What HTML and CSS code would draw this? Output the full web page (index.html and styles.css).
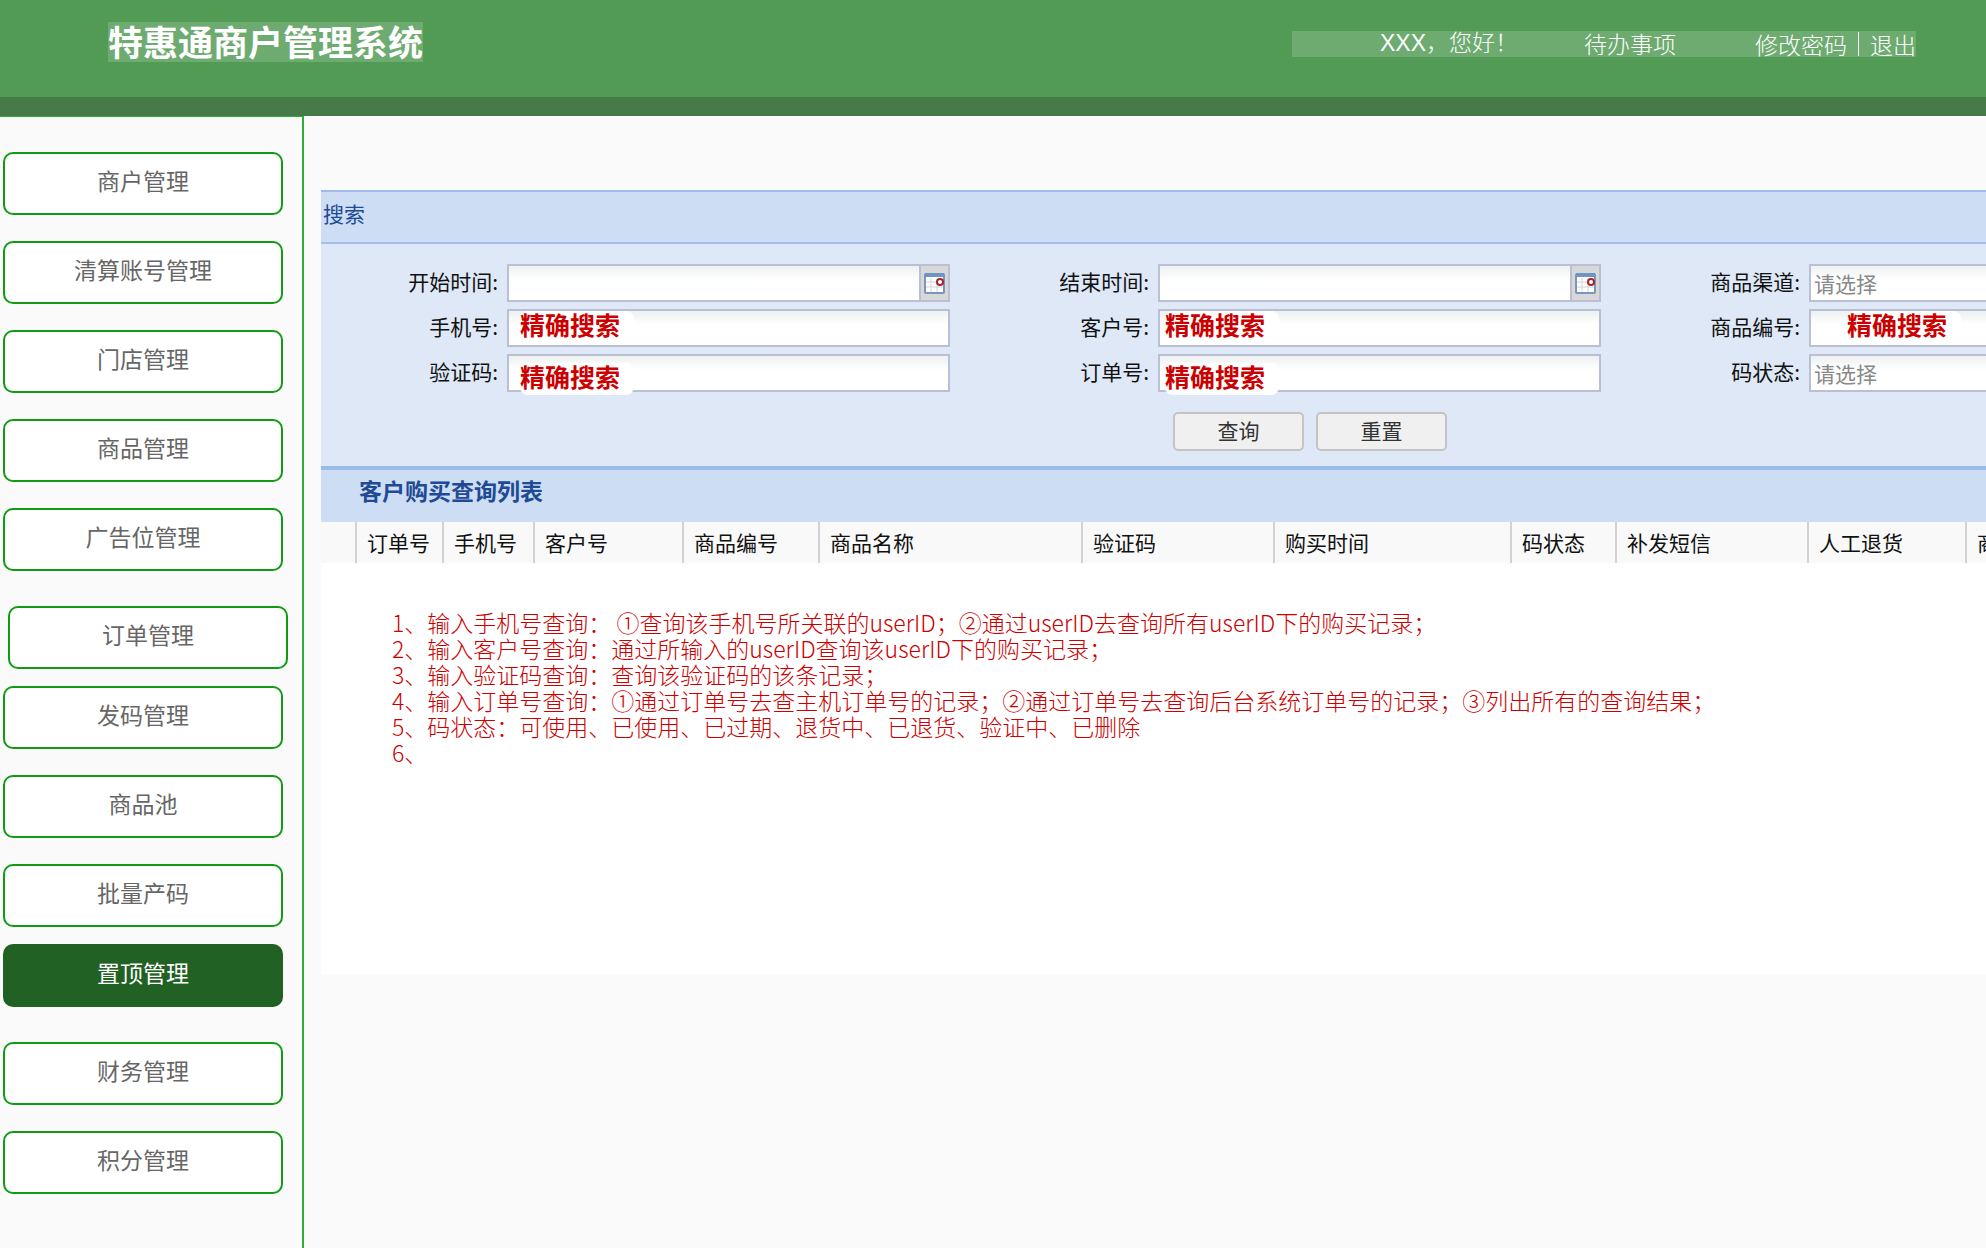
FILE: index.html
```html
<!DOCTYPE html>
<html lang="zh-CN">
<head>
<meta charset="utf-8">
<title>特惠通商户管理系统</title>
<link rel="stylesheet" href="styles.css">
</head>
<body>
<header class="topbar">
  <h1 class="brand">特惠通商户管理系统</h1>
  <div class="user-nav">
    <span class="greeting">XXX，您好！</span>
    <a href="#">待办事项</a>
    <span class="account"><a href="#">修改密码</a><i class="bar"></i><a href="#">退出</a></span>
  </div>
</header>
<div class="layout">
  <nav class="sidebar">
    <a class="item" href="#">商户管理</a>
    <a class="item" href="#">清算账号管理</a>
    <a class="item" href="#">门店管理</a>
    <a class="item" href="#">商品管理</a>
    <a class="item" href="#">广告位管理</a>
    <a class="item apart indented" href="#">订单管理</a>
    <a class="item close" href="#">发码管理</a>
    <a class="item" href="#">商品池</a>
    <a class="item" href="#">批量产码</a>
    <a class="item close active" href="#">置顶管理</a>
    <a class="item apart" href="#">财务管理</a>
    <a class="item" href="#">积分管理</a>
  </nav>
  <main class="content">
    <section>
      <h2 class="panel-title">搜索</h2>
      <form class="search">
        <div class="fields">
          <div class="field">
            <label for="start">开始时间:</label>
            <div class="control dated"><input id="start" type="text"><button type="button" class="picker" aria-label="选择开始时间"><svg width="21" height="22" viewBox="0 0 21 22"><rect x="1" y="2" width="19" height="19" rx="1" fill="#fff" stroke="#7796c0" stroke-width="2"/><path d="M1 3h19" stroke="#6f93c2" stroke-width="4"/><path d="M7 6v14M13 6v14M2 10h17M2 15h17" stroke="#d4d4d4" stroke-width="1"/><circle cx="16" cy="10" r="3" fill="#fff" stroke="#a12630" stroke-width="2"/></svg></button></div>
          </div>
          <div class="field">
            <label for="end">结束时间:</label>
            <div class="control dated"><input id="end" type="text"><button type="button" class="picker" aria-label="选择结束时间"><svg width="21" height="22" viewBox="0 0 21 22"><rect x="1" y="2" width="19" height="19" rx="1" fill="#fff" stroke="#7796c0" stroke-width="2"/><path d="M1 3h19" stroke="#6f93c2" stroke-width="4"/><path d="M7 6v14M13 6v14M2 10h17M2 15h17" stroke="#d4d4d4" stroke-width="1"/><circle cx="16" cy="10" r="3" fill="#fff" stroke="#a12630" stroke-width="2"/></svg></button></div>
          </div>
          <div class="field">
            <label for="channel">商品渠道:</label>
            <div class="control"><select id="channel"><option>请选择</option></select></div>
          </div>
          <div class="field">
            <label for="phone">手机号:</label>
            <div class="control"><input id="phone" type="text"><span class="note upper first">精确搜索</span></div>
          </div>
          <div class="field">
            <label for="customer">客户号:</label>
            <div class="control"><input id="customer" type="text"><span class="note upper">精确搜索</span></div>
          </div>
          <div class="field">
            <label for="goods">商品编号:</label>
            <div class="control"><input id="goods" type="text"><span class="note upper last">精确搜索</span></div>
          </div>
          <div class="field">
            <label for="code">验证码:</label>
            <div class="control"><input id="code" type="text"><span class="note lower first">精确搜索</span></div>
          </div>
          <div class="field">
            <label for="order">订单号:</label>
            <div class="control"><input id="order" type="text"><span class="note lower">精确搜索</span></div>
          </div>
          <div class="field">
            <label for="state">码状态:</label>
            <div class="control"><select id="state"><option>请选择</option></select></div>
          </div>
        </div>
        <div class="actions">
          <button type="button" class="btn">查询</button>
          <button type="reset" class="btn">重置</button>
        </div>
      </form>
    </section>
    <section class="results">
      <h2 class="list-title">客户购买查询列表</h2>
      <table class="grid">
        <colgroup><col class="c-tick"><col class="c-order"><col class="c-phone"><col class="c-customer"><col class="c-goods"><col class="c-name"><col class="c-code"><col class="c-time"><col class="c-state"><col class="c-sms"><col class="c-refund"><col class="c-more"></colgroup>
        <thead>
          <tr><th></th><th>订单号</th><th>手机号</th><th>客户号</th><th>商品编号</th><th>商品名称</th><th>验证码</th><th>购买时间</th><th>码状态</th><th>补发短信</th><th>人工退货</th><th>商</th></tr>
        </thead>
      </table>
      <div class="remarks">
        <p>1、输入手机号查询： ①查询该手机号所关联的userID；②通过userID去查询所有userID下的购买记录；</p>
        <p>2、输入客户号查询：通过所输入的userID查询该userID下的购买记录；</p>
        <p>3、输入验证码查询：查询该验证码的该条记录；</p>
        <p>4、输入订单号查询：①通过订单号去查主机订单号的记录；②通过订单号去查询后台系统订单号的记录；③列出所有的查询结果；</p>
        <p>5、码状态：可使用、已使用、已过期、退货中、已退货、验证中、已删除</p>
        <p>6、</p>
      </div>
    </section>
  </main>
</div>
</body>
</html>
```
FILE: styles.css
```css
* { box-sizing: border-box; }

body {
  margin: 0;
  min-height: 100vh;
  display: flex;
  flex-direction: column;
  overflow-x: hidden;
  background: #fafafa;
  color: #111;
  font: 21px/26px "Noto Sans CJK SC", sans-serif;
}

h1, h2, p { margin: 0; }
a { color: inherit; text-decoration: none; }

.topbar {
  display: flex;
  justify-content: space-between;
  align-items: flex-start;
  height: 116px;
  padding: 22px 70px 0 108px;
  background: #519b55;
  border-bottom: 19px solid #467a48;
}

.brand {
  height: 40px;
  background: #6eab70;
  color: #fff;
  font-size: 35px;
  line-height: 38px;
}

.user-nav {
  display: flex;
  justify-content: flex-end;
  gap: 66px;
  width: 624px;
  height: 26px;
  margin-top: 9px;
  background: #6eab70;
  color: #fff;
  font-size: 23px;
  font-weight: 300;
  line-height: 25px;
  white-space: nowrap;
}

.greeting { font-family: "Liberation Sans", "Noto Sans CJK SC", sans-serif; }
.account { display: flex; align-items: center; padding-left: 13px; }
.bar { width: 1px; height: 24px; margin: 0 11px; background: #fff; }

.layout {
  flex: 1;
  display: grid;
  grid-template-columns: 304px minmax(0, 1fr);
}

.sidebar {
  display: flex;
  flex-direction: column;
  gap: 26px;
  padding: 35px 19px 35px 3px;
  border-top: 1px solid #2fae30;
  border-right: 2px solid #35aa38;
}

.item {
  width: 280px;
  height: 63px;
  padding-bottom: 7px;
  display: flex;
  align-items: center;
  justify-content: center;
  border: 2px solid #109c12;
  border-radius: 10px;
  background: #fff;
  color: #666;
  font-size: 23px;
}

.apart { margin-top: 9px; }
.close { margin-top: -9px; }
.indented { margin-left: 5px; }
.active { background: #216123; border-color: #216123; color: #fff; }

.content { padding: 74px 0 0 17px; overflow: hidden; }

.panel-title {
  height: 54px;
  padding: 8px 2px;
  border-top: 2px solid #9cbdea;
  border-bottom: 2px solid #a3bfec;
  background: #cdddf3;
  color: #204a94;
  font-size: 21px;
  font-weight: 400;
}

.search {
  height: 222px;
  padding-top: 20px;
  background: #dee8f7;
}

.fields {
  display: grid;
  grid-template-columns: repeat(3, 628px);
  gap: 7px 23px;
}

.field {
  display: grid;
  grid-template-columns: 177px 443px;
  column-gap: 9px;
}

.field label { line-height: 35px; text-align: right; }

.control { position: relative; display: flex; height: 38px; }

.control input, .control select {
  flex: 1;
  min-width: 0;
  height: 100%;
  margin: 0;
  padding: 0 3px;
  border: 2px solid #bbbfd3;
  border-radius: 0;
  appearance: none;
  background: linear-gradient(#eef1f1, #fff 14px);
  color: #888;
  font: inherit;
}

.picker {
  width: 29px;
  margin: 0;
  padding: 0;
  display: grid;
  place-items: center;
  border: 2px solid #bbbfd3;
  border-left: 0;
  background: #d8d8d8;
}

.note {
  position: absolute;
  left: 7px;
  width: 114px;
  height: 32px;
  border-radius: 8px;
  background: #fff;
  color: #c00;
  font-size: 25px;
  font-weight: 700;
  line-height: 27px;
}

.upper { top: 2px; }
.lower { top: 9px; }
.first { left: 13px; }
.last { left: 38px; }

.actions {
  display: flex;
  justify-content: center;
  gap: 12px;
  width: 1978px;
  margin-top: 20px;
}

.btn {
  width: 131px;
  height: 39px;
  padding: 0 0 3px;
  border: 2px solid #c4c4c4;
  border-radius: 5px;
  background: #f0f0f0;
  color: #333;
  font: inherit;
}

.results { min-height: 508px; background: #fff; }

.list-title {
  height: 56px;
  padding: 7px 38px;
  border-top: 4px solid #9abce9;
  background: #cdddf3;
  color: #204a94;
  font-size: 23px;
}

.grid {
  width: 1945px;
  table-layout: fixed;
  border-collapse: collapse;
  background: #f9f9f9;
}

.grid th {
  height: 41px;
  padding: 0 0 2px 10px;
  border-left: 2px solid #d2d2d2;
  font-weight: 400;
  text-align: left;
}

.grid th:first-child { border-left: 0; }

.c-tick { width: 35px; }
.c-order { width: 87px; }
.c-phone { width: 91px; }
.c-customer { width: 149px; }
.c-goods { width: 136px; }
.c-name { width: 263px; }
.c-code { width: 192px; }
.c-time { width: 237px; }
.c-state { width: 105px; }
.c-sms { width: 192px; }
.c-refund { width: 158px; }
.c-more { width: 300px; }

.remarks {
  padding: 46px 0 0 71px;
  color: #c00;
  font-size: 23px;
  font-weight: 300;
  white-space: nowrap;
}
```
